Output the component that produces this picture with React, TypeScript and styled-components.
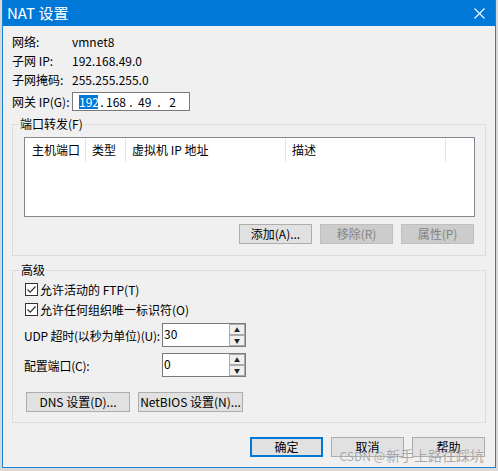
import styled, { createGlobalStyle, css } from 'styled-components'

const GlobalStyle = createGlobalStyle`
  html, body {
    margin: 0;
    padding: 0;
  }
  body {
    background: #d9d9d9;
    font-family: "Noto Sans CJK SC", "Noto Sans", sans-serif;
    font-size: 12px;
    color: #000;
  }
`

export default function App() {
    return (
        <>
            <GlobalStyle />
            <Window>
                <TitleBar>
                    <Title>NAT 设置</Title>
                    <svg width="11" height="11" viewBox="0 0 11 11">
                        <path d="M0.5 0.5 L10.5 10.5 M10.5 0.5 L0.5 10.5" stroke="#fff" strokeWidth="1.1" />
                    </svg>
                </TitleBar>
                <Body>
                    <InfoGrid>
                        <span>网络:</span>
                        <span>vmnet8</span>
                        <span>子网 IP:</span>
                        <span>192.168.49.0</span>
                        <span>子网掩码:</span>
                        <span>255.255.255.0</span>
                    </InfoGrid>
                    <GatewayRow>
                        <InfoLabel>网关 IP(G):</InfoLabel>
                        <IpBox>
                            <Octet $w={19} $selected>192</Octet>
                            <Octet $w={8}>.</Octet>
                            <Octet $w={18}>168</Octet>
                            <Octet $w={14}>.</Octet>
                            <Octet $w={12}>49</Octet>
                            <Octet $w={18}>.</Octet>
                            <Octet $w={9}>2</Octet>
                        </IpBox>
                    </GatewayRow>

                    <Group $pad="5px 10px 11px 11px" $top={5}>
                        <Legend>端口转发(F)</Legend>
                        <ListView>
                            <Header>
                                <HeaderCell $w={61} $pl={7}>主机端口</HeaderCell>
                                <HeaderCell $w={40} $pl={6}>类型</HeaderCell>
                                <HeaderCell $w={160} $pl={6}>虚拟机 IP 地址</HeaderCell>
                                <HeaderCell $w={160} $pl={6}>描述</HeaderCell>
                            </Header>
                        </ListView>
                        <ButtonRow>
                            <Button>添加(A)...</Button>
                            <Button disabled>移除(R)</Button>
                            <Button disabled>属性(P)</Button>
                        </ButtonRow>
                    </Group>

                    <Group $pad="1px 10px 10px 12px" $top={6}>
                        <Legend>高级</Legend>
                        <CheckRow>
                            <CheckBox>
                                <svg width="11" height="11" viewBox="0 0 11 11">
                                    <path d="M1.5 5.5 L4.2 8.2 L9.5 2.5" fill="none" stroke="#333" strokeWidth="1.2" />
                                </svg>
                            </CheckBox>
                            允许活动的 FTP(T)
                        </CheckRow>
                        <CheckRow>
                            <CheckBox>
                                <svg width="11" height="11" viewBox="0 0 11 11">
                                    <path d="M1.5 5.5 L4.2 8.2 L9.5 2.5" fill="none" stroke="#333" strokeWidth="1.2" />
                                </svg>
                            </CheckBox>
                            允许任何组织唯一标识符(O)
                        </CheckRow>
                        <FieldRow $top={4}>
                            <FieldLabel>UDP 超时(以秒为单位)(U):</FieldLabel>
                            <SpinBox>
                                <SpinValue>30</SpinValue>
                                <SpinButtons>
                                    <SpinButton>▲</SpinButton>
                                    <SpinButton>▼</SpinButton>
                                </SpinButtons>
                            </SpinBox>
                        </FieldRow>
                        <FieldRow $top={6}>
                            <FieldLabel>配置端口(C):</FieldLabel>
                            <SpinBox>
                                <SpinValue>0</SpinValue>
                                <SpinButtons>
                                    <SpinButton>▲</SpinButton>
                                    <SpinButton>▼</SpinButton>
                                </SpinButtons>
                            </SpinBox>
                        </FieldRow>
                        <SettingsRow>
                            <Button $w={104}>DNS 设置(D)...</Button>
                            <Button $w={105}>NetBIOS 设置(N)...</Button>
                        </SettingsRow>
                    </Group>

                    <Footer>
                        <Button $primary>确定</Button>
                        <Button>取消</Button>
                        <Button>帮助</Button>
                    </Footer>
                </Body>
                <Watermark>
                    <WatermarkLatin>CSDN @</WatermarkLatin>新手上路往踩坑
                </Watermark>
            </Window>
        </>
    )
}

const Window = styled.div`
    position: relative;
    box-sizing: border-box;
    width: 494px;
    height: 468px;
    margin-left: 2px;
    border: 1px solid #1883d7;
    border-top: none;
    background: #f0f0f0;
    overflow: hidden;
`

const TitleBar = styled.div`
    height: 26px;
    background: #0078d7;
    color: #fff;
    display: flex;
    align-items: center;
    justify-content: space-between;
    padding: 0 10px 0 4px;
`

const Title = styled.span`
    font-size: 15px;
    line-height: 26px;
`

const Body = styled.div`
    padding: 6px 9px 0 9px;
`

const InfoGrid = styled.div`
    display: grid;
    grid-template-columns: 60px auto;
    grid-auto-rows: 19px;
    align-items: center;
    line-height: 19px;
`

const GatewayRow = styled.div`
    display: flex;
    align-items: center;
    height: 19px;
    margin-top: 3px;
`

const InfoLabel = styled.span`
    width: 60px;
`

const IpBox = styled.div`
    box-sizing: border-box;
    width: 118px;
    height: 19px;
    border: 1px solid #7a7a7a;
    background: #fff;
    display: flex;
    align-items: center;
    padding-left: 6px;
`

const Octet = styled.span<{ $w: number; $selected?: boolean }>`
    width: ${p => p.$w}px;
    text-align: center;
    line-height: 14px;
    ${p =>
        p.$selected &&
        css`
            background: #0078d7;
            color: #fff;
        `}
`

const Group = styled.fieldset<{ $pad: string; $top: number }>`
    margin: ${p => p.$top}px 0 0;
    padding: ${p => p.$pad};
    border: 1px solid #dcdcdc;
    min-width: 0;
`

const Legend = styled.legend`
    padding: 0 1px;
    margin-left: -5px;
    line-height: 16px;
    font-size: 12px;
`

const ListView = styled.div`
    box-sizing: border-box;
    height: 80px;
    border: 1px solid #828790;
    background: #fff;
`

const Header = styled.div`
    display: flex;
    height: 24px;
`

const HeaderCell = styled.div<{ $w: number; $pl: number }>`
    box-sizing: border-box;
    width: ${p => p.$w}px;
    padding-left: ${p => p.$pl}px;
    border-right: 1px solid #e5e5e5;
    line-height: 24px;
    white-space: nowrap;
`

const ButtonRow = styled.div`
    display: flex;
    justify-content: flex-end;
    gap: 8px;
    margin-top: 7px;
    padding-right: 1px;
`

const Button = styled.button<{ $w?: number; $primary?: boolean }>`
    box-sizing: border-box;
    width: ${p => p.$w ?? 73}px;
    height: 20px;
    padding: 0;
    border: 1px solid #adadad;
    background: #e1e1e1;
    font-family: inherit;
    font-size: 12px;
    line-height: 18px;
    color: #000;
    white-space: nowrap;
    ${p =>
        p.$primary &&
        css`
            border-color: #0078d7;
            box-shadow: inset 0 0 0 1px #0078d7;
        `}
    &:disabled {
        background: #cccccc;
        border-color: #bfbfbf;
        color: #838383;
    }
`

const CheckRow = styled.label`
    display: flex;
    align-items: center;
    gap: 2px;
    height: 20px;
`

const CheckBox = styled.span`
    box-sizing: border-box;
    width: 13px;
    height: 13px;
    border: 1px solid #333;
    background: #fff;
    display: flex;
    align-items: center;
    justify-content: center;
`

const FieldRow = styled.div<{ $top: number }>`
    display: flex;
    align-items: center;
    margin-top: ${p => p.$top}px;
`

const FieldLabel = styled.span`
    width: 138px;
    margin-left: -1px;
    letter-spacing: -0.2px;
    white-space: nowrap;
`

const SpinBox = styled.div`
    box-sizing: border-box;
    width: 84px;
    height: 24px;
    border: 1px solid #7a7a7a;
    background: #fff;
    display: flex;
`

const SpinValue = styled.span`
    flex: 1;
    padding-left: 1px;
    line-height: 19px;
`

const SpinButtons = styled.div`
    width: 16px;
    display: flex;
    flex-direction: column;
`

const SpinButton = styled.span`
    flex: 1;
    box-sizing: border-box;
    border: 1px solid #acacac;
    background: #f0f0f0;
    font-size: 6px;
    line-height: 9px;
    text-align: center;
    color: #222;
`

const SettingsRow = styled.div`
    display: flex;
    gap: 8px;
    margin-top: 15px;
    padding-left: 1px;
`

const Footer = styled.div`
    display: flex;
    justify-content: flex-end;
    gap: 8px;
    margin-top: 14px;
    padding-right: 1px;
`

const Watermark = styled.span`
    position: absolute;
    right: 11px;
    bottom: 1px;
    font-size: 14px;
    line-height: 20px;
    color: rgba(100, 100, 100, 0.55);
    text-shadow: 0 0 1px rgba(255, 255, 255, 0.6);
    pointer-events: none;
`

const WatermarkLatin = styled.span`
    font-size: 12px;
    margin-right: 1px;
`
